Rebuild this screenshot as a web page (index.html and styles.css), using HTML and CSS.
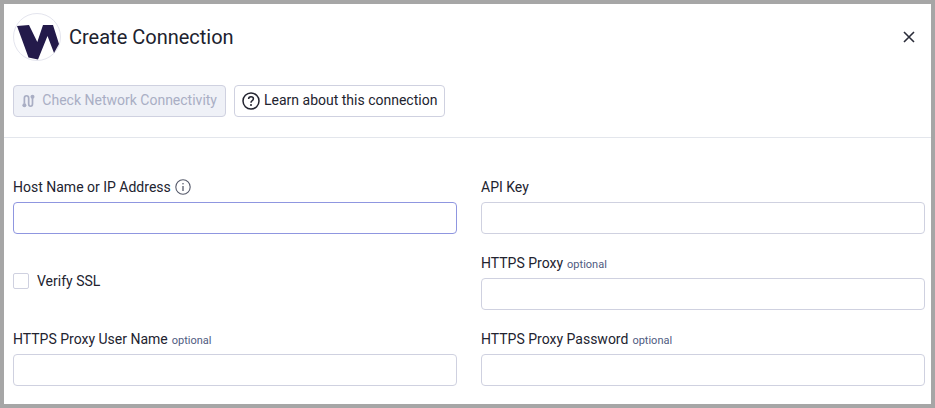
FILE: index.html
```html
<!DOCTYPE html>
<html lang="en">
<head>
    <meta charset="UTF-8">
    <meta name="viewport" content="width=device-width, initial-scale=1.0">
    <title>Create Connection</title>
    <link rel="stylesheet" href="styles.css">
</head>
<body>

    <div class="dialog">
        <header class="dialog-header">
            <div class="logo">
                <svg viewBox="0 0 46 46" width="46" height="46">
                    <path fill="#231a4a" d="M3 12 L15 11 L23.300 28 L29 11 L39 11 L45 30 L40 39 L33.500 22 L24 45.500 L14.500 43.500 Z"/>
                </svg>
            </div>
            <h1>Create Connection</h1>
            <button class="close-btn" aria-label="Close">
                <svg viewBox="0 0 12 12" width="12" height="12">
                    <path d="M1 1 L11 11 M11 1 L1 11" stroke="#2b2d3a" stroke-width="1.600" fill="none"/>
                </svg>
            </button>
        </header>

        <div class="actions">
            <button class="btn btn-disabled">
                <svg viewBox="0 0 14 16" width="14" height="16" fill="none" stroke="#a9aec4" stroke-width="1.800">
                    <path d="M2.500 11 V5 Q2.500 2.500 4.700 2.500 Q7 2.500 7 5 V11 Q7 13.500 9 13.500 Q11 13.500 11 11 V4"/>
                    <circle cx="2.500" cy="12.500" r="2.100" fill="#a9aec4" stroke="none"/>
                    <circle cx="11" cy="3.500" r="2.100" fill="#a9aec4" stroke="none"/>
                </svg>
                <span>Check Network Connectivity</span>
            </button>
            <button class="btn">
                <svg viewBox="0 0 18 18" width="18" height="18" fill="none" stroke="#22232f" stroke-width="1.500">
                    <circle cx="9" cy="9" r="8"/>
                    <path d="M6.600 7 Q6.600 4.700 9 4.700 Q11.400 4.700 11.400 6.800 Q11.400 8 10 8.800 Q9 9.400 9 10.800"/>
                    <circle cx="9" cy="13.100" r="1" fill="#22232f" stroke="none"/>
                </svg>
                <span>Learn about this connection</span>
            </button>
        </div>

        <hr class="divider">

        <form class="form-grid">
            <div class="field">
                <label for="host">Host Name or IP Address
                    <svg class="info" viewBox="0 0 16 16" width="16" height="16" fill="none" stroke="#565a6b" stroke-width="1.100">
                        <circle cx="8" cy="8" r="7.200"/>
                        <path d="M8 7 V12" stroke-width="1.300"/>
                        <circle cx="8" cy="4.700" r="0.800" fill="#565a6b" stroke="none"/>
                    </svg>
                </label>
                <input type="text" id="host" class="input-focus">
            </div>
            <div class="field">
                <label for="apikey">API Key</label>
                <input type="text" id="apikey">
            </div>
            <div class="field check-field">
                <input type="checkbox" id="ssl">
                <label for="ssl">Verify SSL</label>
            </div>
            <div class="field">
                <label for="proxy">HTTPS Proxy <small>optional</small></label>
                <input type="text" id="proxy">
            </div>
            <div class="field">
                <label for="proxyuser">HTTPS Proxy User Name <small>optional</small></label>
                <input type="text" id="proxyuser">
            </div>
            <div class="field">
                <label for="proxypass">HTTPS Proxy Password <small>optional</small></label>
                <input type="text" id="proxypass">
            </div>
        </form>
    </div>

</body>
</html>
```

FILE: styles.css
```css
/* General Styling */
html, body {
    height: 100%;
}

body {
    font-family: Roboto, "Liberation Sans", sans-serif;
    background-color: #a6a6a6;
    color: #22232f;
    margin: 0;
    padding: 4px;
    box-sizing: border-box;
    overflow: hidden;
}

.dialog {
    background-color: #ffffff;
    height: 400px;
    overflow: hidden;
}

/* Header */
.dialog-header {
    display: flex;
    align-items: center;
    gap: 8px;
    padding: 9px 16px 0 9px;
    height: 48px;
}

.logo {
    width: 48px;
    height: 48px;
    box-sizing: border-box;
    border: 1px solid #e4e5ee;
    border-radius: 50%;
    flex-shrink: 0;
}

.logo svg {
    display: block;
}

h1 {
    margin: 0;
    flex: 1;
    font-size: 20px;
    font-weight: 400;
    color: #20222e;
}

.close-btn {
    background: none;
    border: none;
    padding: 0;
    width: 12px;
    height: 12px;
    cursor: pointer;
}

.close-btn svg {
    display: block;
}

/* Buttons */
.actions {
    display: flex;
    gap: 8px;
    padding: 24px 9px 0;
}

.btn {
    display: flex;
    align-items: center;
    gap: 4px;
    height: 32px;
    box-sizing: border-box;
    padding: 0 7px;
    font-family: inherit;
    font-size: 14px;
    color: #22232f;
    background-color: #ffffff;
    border: 1px solid #cfd1e0;
    border-radius: 4px;
    cursor: pointer;
}

.btn span {
    margin-bottom: 2px;
}

.btn-disabled {
    width: 213px;
    padding: 0 8px;
    gap: 7px;
    color: #a9aec4;
    background-color: #eff1f7;
    white-space: nowrap;
}

.divider {
    border: none;
    border-top: 1px solid #e3e6ec;
    margin: 20px 0 0;
}

/* Form */
.form-grid {
    display: grid;
    grid-template-columns: 444px 444px;
    column-gap: 24px;
    grid-auto-rows: 76px;
    padding: 30px 6px 0 9px;
}

.field label {
    display: flex;
    align-items: center;
    gap: 4px;
    height: 34px;
    box-sizing: border-box;
    padding-top: 4px;
    font-size: 14px;
    color: #22232f;
}

.field label small {
    font-size: 11px;
    color: #4f5b7f;
    margin-top: 2px;
}

.field input[type="text"] {
    display: block;
    width: 100%;
    height: 32px;
    box-sizing: border-box;
    border: 1px solid #cfd1e0;
    border-radius: 4px;
    background-color: #ffffff;
    outline: none;
}

.field input.input-focus {
    border-color: #8f96e0;
}

.check-field {
    display: flex;
    align-items: center;
    gap: 8px;
    padding-top: 21px;
    height: 32px;
}

.check-field label {
    height: auto;
    padding-top: 0;
}

.check-field input {
    appearance: none;
    width: 16px;
    height: 16px;
    margin: 0;
    border: 1px solid #cfd1e0;
    border-radius: 2px;
    background-color: #ffffff;
}
```
